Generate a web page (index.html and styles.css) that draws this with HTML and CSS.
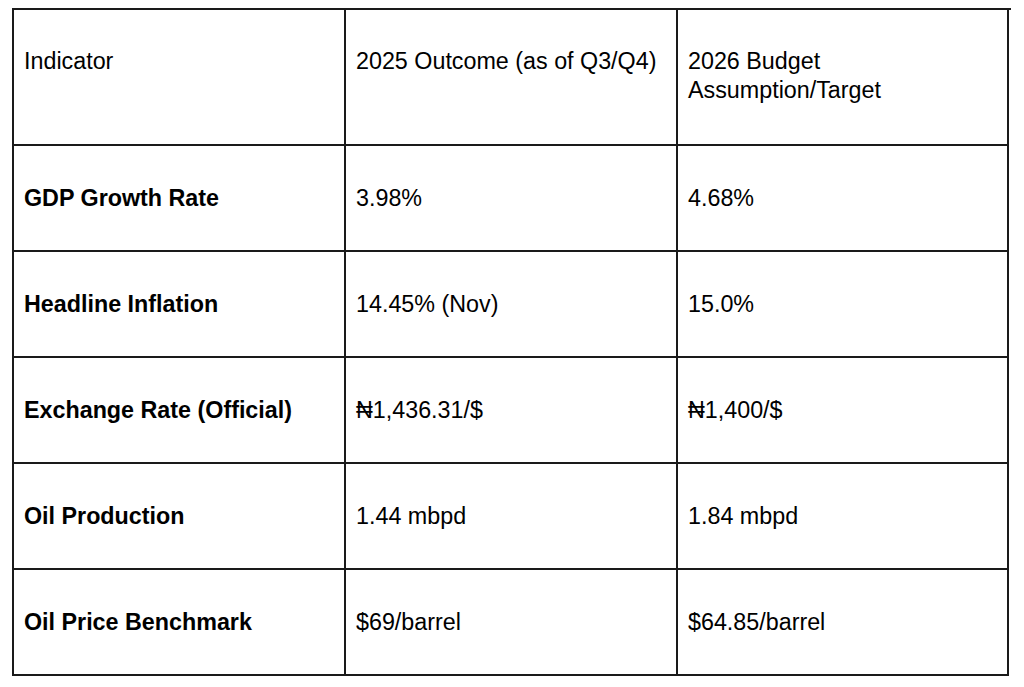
FILE: index.html
```html
<!DOCTYPE html>
<html lang="en">
<head>
<meta charset="utf-8">
<title>Indicators</title>
<link rel="stylesheet" href="styles.css">
</head>
<body>
<div class="table">
  <div class="cell head">Indicator</div>
  <div class="cell head">2025 Outcome (as of Q3/Q4)</div>
  <div class="cell head">2026 Budget Assumption/Target</div>

  <div class="cell label">GDP Growth Rate</div>
  <div class="cell">3.98%</div>
  <div class="cell">4.68%</div>

  <div class="cell label">Headline Inflation</div>
  <div class="cell">14.45% (Nov)</div>
  <div class="cell">15.0%</div>

  <div class="cell label">Exchange Rate (Official)</div>
  <div class="cell">₦1,436.31/$</div>
  <div class="cell">₦1,400/$</div>

  <div class="cell label">Oil Production</div>
  <div class="cell">1.44 mbpd</div>
  <div class="cell">1.84 mbpd</div>

  <div class="cell label">Oil Price Benchmark</div>
  <div class="cell">$69/barrel</div>
  <div class="cell">$64.85/barrel</div>
</div>
</body>
</html>
```
FILE: styles.css
```css
html, body {
  margin: 0;
  padding: 0;
  background: #fff;
}

body {
  font-family: "Liberation Sans", Arial, sans-serif;
  font-size: 23.3px;
  line-height: 29px;
  color: #000;
}

.table {
  display: grid;
  grid-template-columns: 332px 332px 331px;
  grid-template-rows: 136px repeat(5, 106px);
  width: 997px;
  margin: 8px 0 0 12px;
  border-top: 2px solid #1a1a1a;
  border-left: 2px solid #1a1a1a;
  box-sizing: content-box;
}

.cell {
  box-sizing: border-box;
  border-right: 2px solid #1a1a1a;
  border-bottom: 2px solid #1a1a1a;
  padding: 0 10px;
  display: flex;
  align-items: center;
}

.head {
  align-items: flex-start;
  padding-top: 37px;
}

.label {
  font-weight: bold;
}
```
